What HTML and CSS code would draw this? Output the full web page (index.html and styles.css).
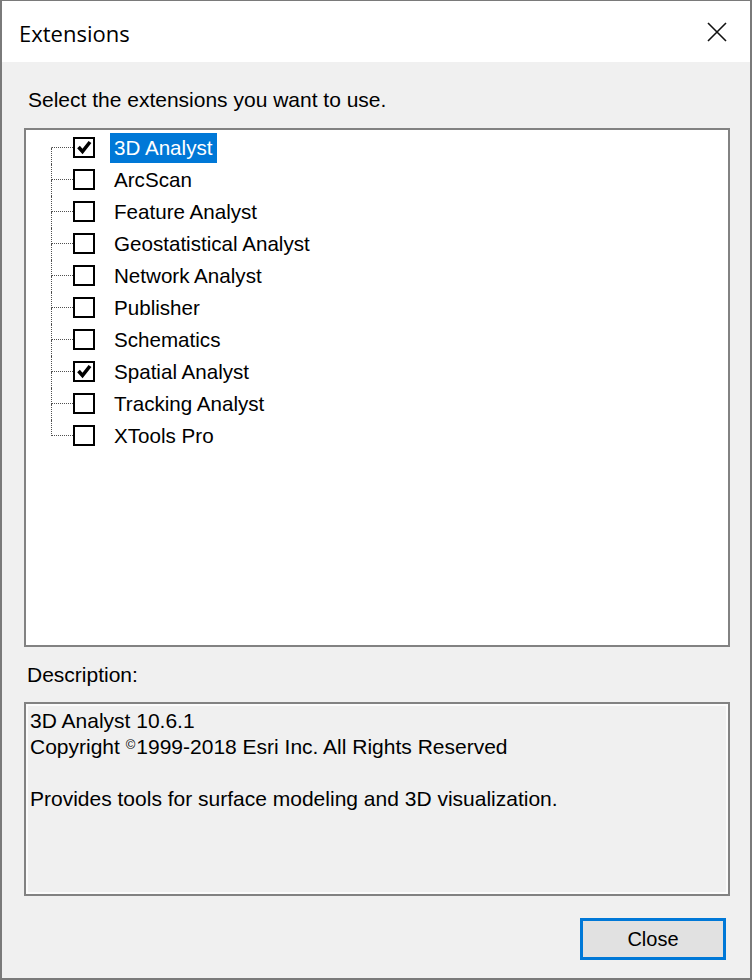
FILE: index.html
```html
<!DOCTYPE html>
<html>
<head>
<meta charset="utf-8">
<title>Extensions</title>
<link rel="stylesheet" href="styles.css">
</head>
<body>
<div class="window">
  <div class="titlebar">
    <span class="title">Extensions</span>
    <svg class="close-x" width="20" height="20" viewBox="0 0 20 20"><path d="M1 1 L19 19 M19 1 L1 19" stroke="#111" stroke-width="1.6" fill="none"/></svg>
  </div>
  <div class="content">
    <div class="label">Select the extensions you want to use.</div>
    <div class="listbox">
      <ul class="tree">
        <li class="row first">
          <span class="conn"><span class="up"></span><span class="down"></span></span>
          <span class="cb"><svg viewBox="0 0 17 17" width="17" height="17"><polyline points="2.5,8 6.5,12.5 14,3" fill="none" stroke="#000" stroke-width="3.6"/></svg></span>
          <span class="name selected">3D Analyst</span>
        </li>
        <li class="row"><span class="conn"><span class="up"></span><span class="down"></span></span><span class="cb"></span><span class="name">ArcScan</span></li>
        <li class="row"><span class="conn"><span class="up"></span><span class="down"></span></span><span class="cb"></span><span class="name">Feature Analyst</span></li>
        <li class="row"><span class="conn"><span class="up"></span><span class="down"></span></span><span class="cb"></span><span class="name">Geostatistical Analyst</span></li>
        <li class="row"><span class="conn"><span class="up"></span><span class="down"></span></span><span class="cb"></span><span class="name">Network Analyst</span></li>
        <li class="row"><span class="conn"><span class="up"></span><span class="down"></span></span><span class="cb"></span><span class="name">Publisher</span></li>
        <li class="row"><span class="conn"><span class="up"></span><span class="down"></span></span><span class="cb"></span><span class="name">Schematics</span></li>
        <li class="row">
          <span class="conn"><span class="up"></span><span class="down"></span></span>
          <span class="cb"><svg viewBox="0 0 17 17" width="17" height="17"><polyline points="2.5,8 6.5,12.5 14,3" fill="none" stroke="#000" stroke-width="3.6"/></svg></span>
          <span class="name">Spatial Analyst</span>
        </li>
        <li class="row"><span class="conn"><span class="up"></span><span class="down"></span></span><span class="cb"></span><span class="name">Tracking Analyst</span></li>
        <li class="row last"><span class="conn"><span class="up"></span><span class="down"></span></span><span class="cb"></span><span class="name">XTools Pro</span></li>
      </ul>
    </div>
    <div class="label desc-label">Description:</div>
    <div class="descbox">
      <div class="line">3D Analyst 10.6.1</div>
      <div class="line">Copyright <sup class="copy">©</sup>1999-2018 Esri Inc. All Rights Reserved</div>
      <div class="line">&nbsp;</div>
      <div class="line">Provides tools for surface modeling and 3D visualization.</div>
    </div>
    <div class="actions">
      <button class="btn">Close</button>
    </div>
  </div>
</div>
</body>
</html>
```

FILE: styles.css
```css
html, body {
  margin: 0;
  padding: 0;
  background: #6e6e6e;
}

.window {
  width: 752px;
  height: 980px;
  box-sizing: border-box;
  border-style: solid;
  border-color: #7a7a7a;
  border-width: 1px 2px 2px 2px;
  background: #f0f0f0;
  display: flex;
  flex-direction: column;
  font-family: "Liberation Sans", Arial, sans-serif;
  color: #000;
}

.titlebar {
  height: 61px;
  flex: none;
  background: #fff;
  display: flex;
  align-items: center;
  justify-content: space-between;
  padding: 0 23px 0 17px;
}

.title {
  font-family: "Open Sans", "Noto Sans", sans-serif;
  font-size: 22px;
  line-height: 30px;
  margin-top: 2px;
}

.close-x {
  display: block;
}

.content {
  flex: 1;
  display: flex;
  flex-direction: column;
  padding: 26px 20px 0 22px;
}

.label {
  font-size: 21px;
  line-height: 24px;
  padding-left: 4px;
  height: 24px;
  white-space: nowrap;
}

.listbox {
  margin-top: 16px;
  height: 519px;
  box-sizing: border-box;
  border: 2px solid #828282;
  background: #fff;
}

.tree {
  list-style: none;
  margin: 0;
  padding: 2px 0 0 25px;
}

.row {
  height: 32px;
  display: flex;
  align-items: center;
}

.conn {
  width: 22px;
  height: 32px;
  display: flex;
  flex-direction: column;
  flex: none;
}

.conn .up {
  height: 16px;
  box-sizing: border-box;
  border-left: 1px dotted #505050;
  border-bottom: 1px dotted #505050;
}

.conn .down {
  height: 16px;
  box-sizing: border-box;
  border-left: 1px dotted #505050;
}

.row.first .conn .up {
  border-left-color: transparent;
}

.row.last .conn .down {
  border-left-color: transparent;
}

.cb {
  width: 22px;
  height: 21px;
  box-sizing: border-box;
  border: 2px solid #000;
  background: #fff;
  flex: none;
  display: flex;
  align-items: center;
  justify-content: center;
  margin-top: -1px;
}

.cb svg {
  display: block;
}

.name {
  margin-left: 15px;
  padding: 0 5px 0 4px;
  font-size: 20.6px;
  line-height: 30px;
  height: 30px;
  white-space: nowrap;
}

.name.selected {
  background: #0078d7;
  color: #fff;
}

.desc-label {
  margin-top: 16px;
  padding-left: 3px;
}

.descbox {
  margin-top: 15px;
  height: 194px;
  box-sizing: border-box;
  border: 2px solid #828282;
  box-shadow: inset 0 0 0 2px #fbfbfb;
  padding: 4px 4px 0 4px;
  background: #f0f0f0;
}

.line {
  font-size: 21px;
  line-height: 26px;
  height: 26px;
  white-space: nowrap;
}

.copy {
  font-size: 13px;
  vertical-align: 5px;
  line-height: 0;
  margin-right: 1px;
}

.actions {
  margin-top: 22px;
  display: flex;
  justify-content: flex-end;
  padding-right: 4px;
}

.btn {
  width: 146px;
  height: 42px;
  box-sizing: border-box;
  border: 3px solid #0078d7;
  background: #e1e1e1;
  font-family: "Liberation Sans", Arial, sans-serif;
  font-size: 20px;
  color: #000;
  padding: 0;
  margin: 0;
}
```
